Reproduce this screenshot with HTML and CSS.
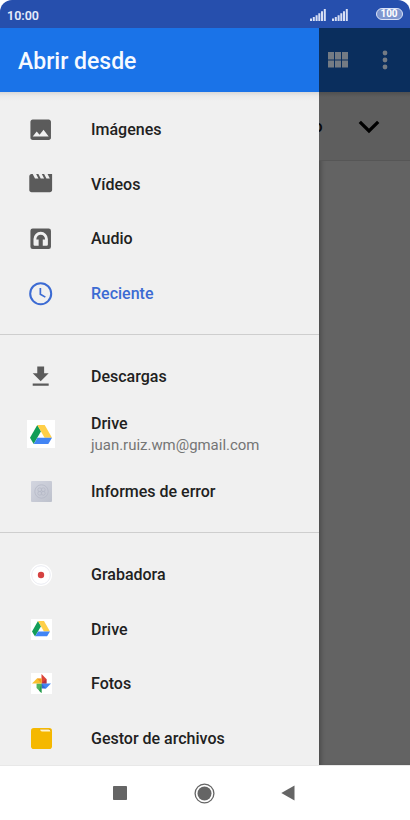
FILE: index.html
```html
<!DOCTYPE html>
<html lang="es">
<head>
<meta charset="utf-8">
<title>Abrir desde</title>
<link rel="stylesheet" href="styles.css">
</head>
<body>
<svg width="0" height="0" class="defs">
  <symbol id="drive" viewBox="0 0 22 19">
    <path fill="#129d58" d="M7.3 0 0 12.8 3.7 19 11 6.3z"/>
    <path fill="#ffcf48" d="M7.3 0h7.4L22 12.8h-7.4z"/>
    <path fill="#4285f4" d="M3.7 19 7.4 12.8H22L18.3 19z"/>
  </symbol>
  <symbol id="signal" viewBox="0 0 16 12">
    <path d="M0 9.5h2V12H0zM2.8 8h2v4h-2zM5.6 6.2h2V12h-2zM8.3 4.2h2V12h-2zM11 2.2h2V12h-2zM13.8 0h2v12h-2z"/>
  </symbol>
</svg>
<div class="phone">
  <header class="status">
    <span class="time">10:00</span>
    <div class="indicators">
      <svg class="signal"><use href="#signal"/></svg>
      <svg class="signal"><use href="#signal"/></svg>
      <span class="battery">100</span>
    </div>
  </header>
  <div class="screen">
    <aside class="drawer">
      <h1 class="title">Abrir desde</h1>
      <nav class="list">
        <ul class="group">
          <li class="row"><span class="icon"><svg width="27.4" height="27.4" viewBox="0 0 24 24"><path fill="#5b5b5b" d="M21 19V5c0-1.100-.9-2-2-2H5c-1.100 0-2 .9-2 2v14c0 1.100.9 2 2 2h14c1.100 0 2-.9 2-2zM8.500 13.500l2.500 3.010L14.500 12l4.500 6H5l3.500-4.500z"/></svg></span><span class="label">Imágenes</span></li>
          <li class="row"><span class="icon"><svg width="27.4" height="27.4" viewBox="0 0 24 24"><path fill="#5b5b5b" d="M18 4l2 4h-3l-2-4h-2l2 4h-3l-2-4H8l2 4H7L5 4H4c-1.100 0-2 .9-2 2v12c0 1.100.9 2 2 2h16c1.100 0 2-.9 2-2V4h-4z" transform="translate(0 -.5)"/></svg></span><span class="label">Vídeos</span></li>
          <li class="row"><span class="icon"><svg width="27.4" height="27.4" viewBox="0 0 24 24"><rect x="3" y="3" width="18" height="18" rx="2" fill="#5b5b5b"/><path fill="#f0f0f0" d="M5.700 12.300a6.300 6.300 0 0 1 12.600 0V17a1.200 1.200 0 0 1-1.200 1.200h-3.300v-5.500h2v-.4a3.800 3.800 0 0 0-7.600 0v.4h2v5.500H6.900A1.200 1.200 0 0 1 5.700 17z"/></svg></span><span class="label">Audio</span></li>
          <li class="row active"><span class="icon"><svg width="27.4" height="27.4" viewBox="0 0 24 24"><circle cx="12" cy="12" r="9.200" fill="none" stroke="#3c6bd3" stroke-width="1.800"/><path d="M11.700 7v5.400l4.400 2.600" fill="none" stroke="#3c6bd3" stroke-width="1.500"/></svg></span><span class="label">Reciente</span></li>
        </ul>
        <ul class="group">
          <li class="row"><span class="icon"><svg width="27.4" height="27.4" viewBox="0 0 24 24"><path fill="#5b5b5b" d="M19 9h-4V3H9v6H5l7 7 7-7zM5 18v2h14v-2H5z"/></svg></span><span class="label">Descargas</span></li>
          <li class="row tall"><span class="icon"><span class="tile tile-large"><svg class="drive"><use href="#drive"/></svg></span></span><span class="label">Drive<small>juan.ruiz.wm@gmail.com</small></span></li>
          <li class="row"><span class="icon"><svg width="21" height="21" viewBox="0 0 21 21"><defs><linearGradient id="g" x2="1" y2="1"><stop stop-color="#d3d6e0"/><stop offset="1" stop-color="#bdc1cc"/></linearGradient></defs><rect width="21" height="21" rx="1" fill="url(#g)"/><g fill="none" stroke="#b5b9c6" stroke-width=".8"><circle cx="10.500" cy="10.500" r="6.700"/><circle cx="8.700" cy="8.700" r="1.900"/><circle cx="12.300" cy="8.700" r="1.900"/><circle cx="8.700" cy="12.300" r="1.900"/><circle cx="12.300" cy="12.300" r="1.900"/></g></svg></span><span class="label">Informes de error</span></li>
        </ul>
        <ul class="group">
          <li class="row"><span class="icon"><svg width="22" height="22" viewBox="0 0 22 22"><circle cx="11" cy="11" r="11" fill="#fff"/><circle cx="11" cy="11" r="9.300" fill="none" stroke="#e4e6ef" stroke-width=".8"/><circle cx="11" cy="11" r="3.200" fill="#d54141"/></svg></span><span class="label">Grabadora</span></li>
          <li class="row"><span class="icon"><span class="tile"><svg class="drive"><use href="#drive"/></svg></span></span><span class="label">Drive</span></li>
          <li class="row"><span class="icon"><span class="tile"><svg width="19" height="19" viewBox="0 0 20 20"><path fill="#dc4437" d="M10 0l5.200 5.200v5L10 10z"/><path fill="#b03045" d="M10 10l5.200-4.800V10z"/><path fill="#4285f4" d="M20 10l-5.200 5.200L10 14.500V10z"/><path fill="#3267d6" d="M10 10l4.800 5.200H10z"/><path fill="#53b45c" d="M10 20l-5.200-5.200V10H10z"/><path fill="#259b52" d="M10 10v10l-2.500-2.500z"/><path fill="#fbc02d" d="M0 10l5.200-5.200L10 5v5z"/><path fill="#f19b25" d="M10 10L5.200 4.800H10z"/></svg></span></span><span class="label">Fotos</span></li>
          <li class="row"><span class="icon"><svg width="21" height="21" viewBox="0 0 21 21"><rect width="21" height="21" rx="2.800" fill="#f5b800"/><path fill="#d99a00" d="M8.500 1H18q2 0 2 3l-1-1.400H9.500z"/><path fill="#fff3cf" d="M9 1.500h8.500q1.800 0 2 2H11q-1.500 0-2-2z"/></svg></span><span class="label">Gestor de archivos</span></li>
        </ul>
      </nav>
    </aside>
    <main class="behind">
      <div class="toolbar">
        <svg width="20" height="16" viewBox="0 0 20 16"><path fill="#747b84" d="M0 0h6v7.400H0zM7 0h6v7.400H7zM14 0h6v7.400h-6zM0 8.400h6v7H0zM7 8.400h6v7H7zM14 8.400h6v7h-6z"/></svg>
        <svg class="more" width="6" height="20" viewBox="0 0 6 20"><g fill="#747b84"><circle cx="3" cy="3" r="2.400"/><circle cx="3" cy="10" r="2.400"/><circle cx="3" cy="17" r="2.400"/></g></svg>
      </div>
      <div class="sort">
        <span class="sort-label">o</span>
        <svg width="22" height="14" viewBox="0 0 22 14"><path d="M1.800 1.800 11 11l9.200-9.200" fill="none" stroke="#000" stroke-width="3.300"/></svg>
      </div>
    </main>
  </div>
  <footer class="keys">
    <svg width="14" height="14"><rect width="14" height="14" rx=".8" fill="#656565"/></svg>
    <svg width="21" height="21" viewBox="0 0 21 21"><circle cx="10.500" cy="10.500" r="9.400" fill="none" stroke="#656565" stroke-width="1.300"/><circle cx="10.500" cy="10.500" r="7" fill="#656565"/></svg>
    <svg width="14" height="16" viewBox="0 0 14 16"><path fill="#656565" d="M13.500.5v15L.3 8z"/></svg>
  </footer>
</div>
</body>
</html>
```
FILE: styles.css
```css
* { box-sizing: border-box; }
body { margin: 0; background: #fff; font-family: Roboto, "Liberation Sans", sans-serif; }
svg { display: block; flex: none; }
.defs { position: absolute; }
.phone { width: 410px; height: 820px; display: flex; flex-direction: column; overflow: hidden; }
.status { height: 28px; width: 409.500px; display: flex; align-items: center; justify-content: space-between; padding: 1px 7px 0 7px; background: #264fad; color: #e5ebfa; border-radius: 12px 12px 0 0; }
.time { padding-top: 1px; font-size: 12.5px; font-weight: 600; letter-spacing: 0; }
.indicators { display: flex; align-items: center; }
.signal { width: 16px; height: 12px; margin: 0 6px 0 0; fill: #d8e0f5; }
.battery { width: 27px; height: 12px; margin: -1px 0 0 22px; border: 1.500px solid #dbe3f7; border-radius: 6px; background: #7f97d0; color: #fff; font-size: 10px; font-weight: 700; line-height: 10px; text-align: center; }
.screen { height: 737px; width: 409.500px; display: flex; }
.drawer { width: 319px; flex: none; background: #f0f0f0; display: flex; flex-direction: column; }
.title { margin: 0; height: 64px; padding: 3px 0 0 18px; line-height: 62px; background: #1a73e8; color: #f6faff; font-size: 23px; font-weight: 500; }
.list { flex: 1; padding-top: 10.100px; background: linear-gradient(#d8d8d8, #eaeaea 4px, #f0f0f0 9px); }
.group { list-style: none; margin: 0; padding: 0; }
.group + .group { margin-top: 12.900px; padding-top: 14.400px; border-top: 1px solid #cecece; }
.row { height: 54.700px; display: flex; align-items: center; color: #212121; }
.tall { height: 60.400px; }
.icon { width: 82px; margin-right: 9px; display: flex; justify-content: center; }
.label { font-size: 16px; font-weight: 500; line-height: 21px; }
.label small { display: block; padding-top: 1px; margin-bottom: -1px; font-size: 14.950px; font-weight: 400; color: #757575; }
.active .label { color: #3c6bd3; }
.tile { width: 21px; height: 21px; background: #fff; display: flex; align-items: center; justify-content: center; }
.tile .drive { width: 18px; height: 15.500px; }
.tile-large { width: 28px; height: 28px; }
.tile-large .drive { width: 22px; height: 19px; }
.behind { flex: 1; background: #636363; box-shadow: inset 4px 0 4px -2px #00000040; overflow: hidden; }
.toolbar { height: 64px; background: #0a2e5d; display: flex; align-items: center; padding-left: 9px; }
.more { margin-left: 34px; }
.sort { height: 68.500px; padding-top: 2px; display: flex; align-items: center; border-bottom: 1px solid #565656; background: linear-gradient(#505050, #5e5e5e 5px, #5e5e5e); }
.sort-label { width: 39px; margin-left: -5.500px; font-size: 16px; font-weight: 500; color: #080808; }
.sort svg { margin-left: 5.500px; }
.keys { height: 55px; border-top: 1px solid #e8e8e8; display: flex; align-items: center; padding-left: 112.700px; }
.keys svg:nth-child(2) { margin-left: 67.300px; }
.keys svg:nth-child(3) { margin-left: 66px; }
```
